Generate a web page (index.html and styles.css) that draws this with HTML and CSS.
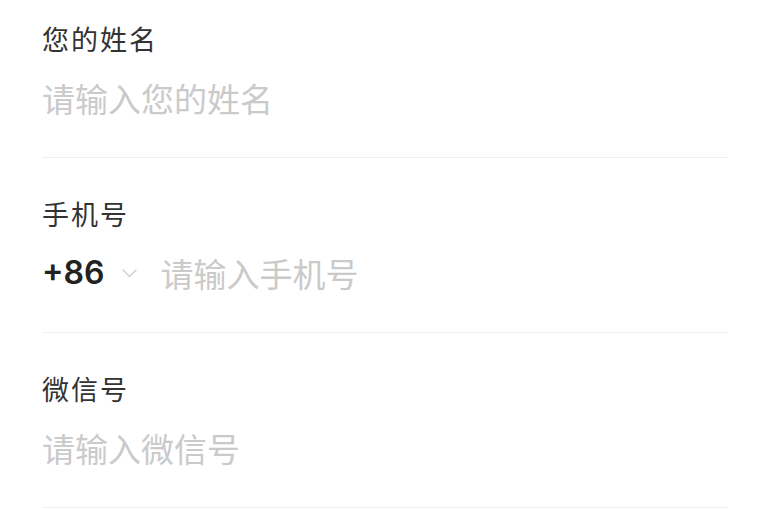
FILE: index.html
```html
<!DOCTYPE html>
<html lang="zh-CN">
<head>
<meta charset="utf-8">
<title>表单</title>
<link rel="stylesheet" href="styles.css">
</head>
<body>
<form class="form">
  <div class="field">
    <label class="label" for="name">您的姓名</label>
    <div class="row">
      <input class="input" id="name" type="text" placeholder="请输入您的姓名">
    </div>
  </div>
  <div class="field">
    <label class="label" for="phone">手机号</label>
    <div class="row">
      <span class="code">+86</span>
      <svg class="chevron" width="15" height="9" viewBox="0 0 15 9" aria-hidden="true">
        <path d="M1 1 L7.5 7.5 L14 1" fill="none" stroke="#cfcfcf" stroke-width="1.4" stroke-linecap="round" stroke-linejoin="round"/>
      </svg>
      <input class="input" id="phone" type="tel" placeholder="请输入手机号">
    </div>
  </div>
  <div class="field">
    <label class="label" for="wx">微信号</label>
    <div class="row">
      <input class="input" id="wx" type="text" placeholder="请输入微信号">
    </div>
  </div>
</form>
</body>
</html>
```
FILE: styles.css
```css
html, body {
  margin: 0;
  padding: 0;
  background: #ffffff;
}

body {
  font-family: "Noto Sans CJK SC", "Noto Sans", sans-serif;
}

.form {
  display: flex;
  flex-direction: column;
  padding: 0 40px 0 42px;
}

.field {
  display: flex;
  flex-direction: column;
  padding: 36px 0 37px;
  border-bottom: 1px solid #f0f0f0;
}

.field:first-child {
  padding-top: 19px;
}

.label {
  font-size: 27px;
  line-height: 40px;
  height: 40px;
  letter-spacing: 2px;
  color: #333333;
}

.row {
  display: flex;
  align-items: center;
  height: 44px;
  margin-top: 17px;
}

.code {
  font-family: Inter, "Liberation Sans", sans-serif;
  font-weight: 600;
  font-size: 32px;
  line-height: 44px;
  color: #222222;
}

.chevron {
  margin-left: 18px;
  margin-right: 23px;
  flex: none;
}

.input {
  flex: 1;
  min-width: 0;
  border: none;
  outline: none;
  padding: 0;
  margin: 0;
  background: transparent;
  font-family: "Noto Sans CJK SC", "Noto Sans", sans-serif;
  font-size: 33px;
  line-height: 44px;
  height: 44px;
  color: #333333;
}

.input::placeholder {
  color: #cacaca;
  opacity: 1;
}
```
